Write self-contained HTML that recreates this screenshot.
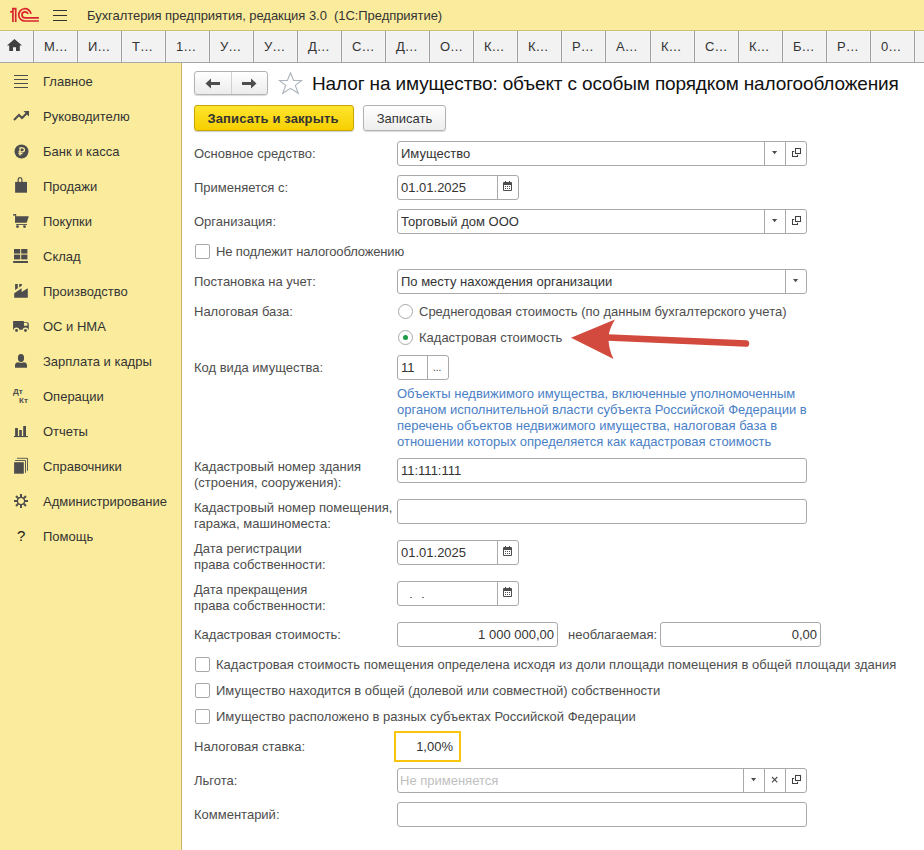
<!DOCTYPE html><html><head><meta charset="utf-8"><style>
*{margin:0;padding:0;box-sizing:border-box}
html,body{width:924px;height:850px;overflow:hidden;background:#fff}
body{position:relative;font-family:"Liberation Sans",sans-serif;font-size:13px;color:#333}
.ab{position:absolute}
.t{position:absolute;white-space:nowrap;line-height:16px;font-size:13px;color:#4d4d4d}
.v{position:absolute;white-space:nowrap;line-height:16px;font-size:13px;color:#333}
.fld{position:absolute;border:1px solid #a9a9a9;border-radius:3px;background:#fff}
.cb{position:absolute;width:15px;height:15px;border:1px solid #a9a9a9;border-radius:2px;background:#fff}
.rb{position:absolute;width:15px;height:15px;border:1px solid #a9a9a9;border-radius:50%;background:#fff}
</style></head><body>
<div class="ab" style="left:0;top:0;width:924px;height:30px;background:#FBEC9D"></div>
<div class="ab" style="left:0;top:29px;width:924px;height:1px;background:#fdefa6"></div>
<div class="ab" style="left:0;top:30px;width:924px;height:1px;background:#cbbb6c"></div>
<svg class="ab" style="left:0;top:0" width="45" height="30" viewBox="0 0 45 30">
<g fill="none" stroke="#d9232e" stroke-width="1.7">
<path d="M12.9 22V8.7H15.7V22"/><path d="M10.1 11.8H13"/>
<path d="M31.0 13.9A6.15 6.15 0 1 0 24.95 21H38.9"/>
<path d="M28.0 14.0A3.05 3.05 0 1 0 25.05 17.9H38.9"/>
</g></svg>
<div class="ab" style="left:53px;top:10px;width:14px;height:1.4px;background:#333"></div>
<div class="ab" style="left:53px;top:15px;width:14px;height:1.4px;background:#333"></div>
<div class="ab" style="left:53px;top:20px;width:14px;height:1.4px;background:#333"></div>
<div class="v" style="left:87px;top:8px;color:#333;letter-spacing:-0.05px">Бухгалтерия предприятия, редакция 3.0 &nbsp;(1С:Предприятие)</div>
<div class="ab" style="left:0;top:31px;width:924px;height:32px;background:#f2f2f2;border-bottom:1px solid #a6a6a6"></div>
<div class="ab" style="left:0;top:31px;width:924px;height:1px;background:#f7f7fb"></div>
<div class="ab" style="left:32px;top:32px;width:3px;height:30px;background:#f7f7f7"></div>
<div class="ab" style="left:33px;top:31px;width:1px;height:31px;background:#9c9c9c"></div>
<div class="ab" style="left:76px;top:32px;width:3px;height:30px;background:#f7f7f7"></div>
<div class="ab" style="left:77px;top:31px;width:1px;height:31px;background:#9c9c9c"></div>
<div class="ab" style="left:120px;top:32px;width:3px;height:30px;background:#f7f7f7"></div>
<div class="ab" style="left:121px;top:31px;width:1px;height:31px;background:#9c9c9c"></div>
<div class="ab" style="left:164px;top:32px;width:3px;height:30px;background:#f7f7f7"></div>
<div class="ab" style="left:165px;top:31px;width:1px;height:31px;background:#9c9c9c"></div>
<div class="ab" style="left:208px;top:32px;width:3px;height:30px;background:#f7f7f7"></div>
<div class="ab" style="left:209px;top:31px;width:1px;height:31px;background:#9c9c9c"></div>
<div class="ab" style="left:252px;top:32px;width:3px;height:30px;background:#f7f7f7"></div>
<div class="ab" style="left:253px;top:31px;width:1px;height:31px;background:#9c9c9c"></div>
<div class="ab" style="left:296px;top:32px;width:3px;height:30px;background:#f7f7f7"></div>
<div class="ab" style="left:297px;top:31px;width:1px;height:31px;background:#9c9c9c"></div>
<div class="ab" style="left:340px;top:32px;width:3px;height:30px;background:#f7f7f7"></div>
<div class="ab" style="left:341px;top:31px;width:1px;height:31px;background:#9c9c9c"></div>
<div class="ab" style="left:384px;top:32px;width:3px;height:30px;background:#f7f7f7"></div>
<div class="ab" style="left:385px;top:31px;width:1px;height:31px;background:#9c9c9c"></div>
<div class="ab" style="left:428px;top:32px;width:3px;height:30px;background:#f7f7f7"></div>
<div class="ab" style="left:429px;top:31px;width:1px;height:31px;background:#9c9c9c"></div>
<div class="ab" style="left:472px;top:32px;width:3px;height:30px;background:#f7f7f7"></div>
<div class="ab" style="left:473px;top:31px;width:1px;height:31px;background:#9c9c9c"></div>
<div class="ab" style="left:516px;top:32px;width:3px;height:30px;background:#f7f7f7"></div>
<div class="ab" style="left:517px;top:31px;width:1px;height:31px;background:#9c9c9c"></div>
<div class="ab" style="left:560px;top:32px;width:3px;height:30px;background:#f7f7f7"></div>
<div class="ab" style="left:561px;top:31px;width:1px;height:31px;background:#9c9c9c"></div>
<div class="ab" style="left:604px;top:32px;width:3px;height:30px;background:#f7f7f7"></div>
<div class="ab" style="left:605px;top:31px;width:1px;height:31px;background:#9c9c9c"></div>
<div class="ab" style="left:649px;top:32px;width:3px;height:30px;background:#f7f7f7"></div>
<div class="ab" style="left:650px;top:31px;width:1px;height:31px;background:#9c9c9c"></div>
<div class="ab" style="left:693px;top:32px;width:3px;height:30px;background:#f7f7f7"></div>
<div class="ab" style="left:694px;top:31px;width:1px;height:31px;background:#9c9c9c"></div>
<div class="ab" style="left:737px;top:32px;width:3px;height:30px;background:#f7f7f7"></div>
<div class="ab" style="left:738px;top:31px;width:1px;height:31px;background:#9c9c9c"></div>
<div class="ab" style="left:781px;top:32px;width:3px;height:30px;background:#f7f7f7"></div>
<div class="ab" style="left:782px;top:31px;width:1px;height:31px;background:#9c9c9c"></div>
<div class="ab" style="left:825px;top:32px;width:3px;height:30px;background:#f7f7f7"></div>
<div class="ab" style="left:826px;top:31px;width:1px;height:31px;background:#9c9c9c"></div>
<div class="ab" style="left:869px;top:32px;width:3px;height:30px;background:#f7f7f7"></div>
<div class="ab" style="left:870px;top:31px;width:1px;height:31px;background:#9c9c9c"></div>
<div class="ab" style="left:913px;top:32px;width:3px;height:30px;background:#f7f7f7"></div>
<div class="ab" style="left:914px;top:31px;width:1px;height:31px;background:#9c9c9c"></div>
<div class="v" style="left:44px;top:39px;color:#333">М&#8230;</div>
<div class="v" style="left:88px;top:39px;color:#333">И&#8230;</div>
<div class="v" style="left:132px;top:39px;color:#333">Т&#8230;</div>
<div class="v" style="left:176px;top:39px;color:#333">1&#8230;</div>
<div class="v" style="left:220px;top:39px;color:#333">У&#8230;</div>
<div class="v" style="left:264px;top:39px;color:#333">У&#8230;</div>
<div class="v" style="left:308px;top:39px;color:#333">Д&#8230;</div>
<div class="v" style="left:352px;top:39px;color:#333">С&#8230;</div>
<div class="v" style="left:396px;top:39px;color:#333">Д&#8230;</div>
<div class="v" style="left:440px;top:39px;color:#333">О&#8230;</div>
<div class="v" style="left:484px;top:39px;color:#333">К&#8230;</div>
<div class="v" style="left:528px;top:39px;color:#333">К&#8230;</div>
<div class="v" style="left:572px;top:39px;color:#333">Р&#8230;</div>
<div class="v" style="left:616px;top:39px;color:#333">А&#8230;</div>
<div class="v" style="left:661px;top:39px;color:#333">К&#8230;</div>
<div class="v" style="left:705px;top:39px;color:#333">С&#8230;</div>
<div class="v" style="left:749px;top:39px;color:#333">К&#8230;</div>
<div class="v" style="left:793px;top:39px;color:#333">Б&#8230;</div>
<div class="v" style="left:837px;top:39px;color:#333">Р&#8230;</div>
<div class="v" style="left:881px;top:39px;color:#333">0&#8230;</div>
<svg class="ab" style="left:7px;top:39px" width="15" height="12" viewBox="0 0 15 12"><path d="M7.5 0L0 6.5H2.2V12H6V8.3H9V12H12.8V6.5H15Z" fill="#404040"/></svg>
<div class="ab" style="left:0;top:63px;width:181px;height:787px;background:#FBEC9D"></div>
<div class="ab" style="left:180px;top:63px;width:1px;height:787px;background:#fdefa6"></div>
<div class="ab" style="left:181px;top:63px;width:1px;height:787px;background:#c4b265"></div>
<div class="v" style="left:43px;top:74px;color:#333">Главное</div>
<div class="v" style="left:43px;top:109px;color:#333">Руководителю</div>
<div class="v" style="left:43px;top:144px;color:#333">Банк и касса</div>
<div class="v" style="left:43px;top:179px;color:#333">Продажи</div>
<div class="v" style="left:43px;top:214px;color:#333">Покупки</div>
<div class="v" style="left:43px;top:249px;color:#333">Склад</div>
<div class="v" style="left:43px;top:284px;color:#333">Производство</div>
<div class="v" style="left:43px;top:319px;color:#333">ОС и НМА</div>
<div class="v" style="left:43px;top:354px;color:#333">Зарплата и кадры</div>
<div class="v" style="left:43px;top:389px;color:#333">Операции</div>
<div class="v" style="left:43px;top:424px;color:#333">Отчеты</div>
<div class="v" style="left:43px;top:459px;color:#333">Справочники</div>
<div class="v" style="left:43px;top:494px;color:#333">Администрирование</div>
<div class="v" style="left:43px;top:529px;color:#333">Помощь</div>
<div class="ab" style="left:14px;top:75px;width:14px;height:1px;background:#4d4d4d"></div>
<div class="ab" style="left:14px;top:79px;width:14px;height:1px;background:#4d4d4d"></div>
<div class="ab" style="left:14px;top:83px;width:14px;height:1px;background:#4d4d4d"></div>
<div class="ab" style="left:14px;top:87px;width:14px;height:1px;background:#4d4d4d"></div>
<svg class="ab" style="left:13px;top:110px" width="17" height="11" viewBox="0 0 17 11"><path d="M1 10L6 5L9 8L14.5 2.5" fill="none" stroke="#4d4d4d" stroke-width="2"/><path d="M10.5 1H16V6.5Z" fill="#4d4d4d"/></svg>
<svg class="ab" style="left:14px;top:144px" width="15" height="15" viewBox="0 0 15 15"><circle cx="7.5" cy="7.5" r="7" fill="#4d4d4d"/><path d="M6 11.5V3.8H8.3C9.6 3.8 10.4 4.6 10.4 5.8C10.4 7 9.6 7.8 8.3 7.8H4.5M4.5 9.6H8.5" fill="none" stroke="#FBEC9D" stroke-width="1.3"/></svg>
<svg class="ab" style="left:13px;top:176px" width="16" height="18" viewBox="0 0 16 18"><path d="M2.1 5.9H14V16.7H2.1Z" fill="#4d4d4d"/><path d="M5.2 6.5V3.6C5.2 2.5 5.9 1.7 7.05 1.7C8.2 1.7 8.9 2.5 8.9 3.6V6.5" fill="none" stroke="#4d4d4d" stroke-width="1.2"/></svg>
<svg class="ab" style="left:13px;top:214px" width="17" height="15" viewBox="0 0 17 15"><rect x="0.1" y="0.1" width="2.9" height="1.5" fill="#4d4d4d"/><rect x="2.2" y="0.1" width="1" height="8.6" fill="#4d4d4d"/><path d="M2.2 2.2H15.8L13.7 8.7H2.2Z" fill="#4d4d4d"/><rect x="3.1" y="10.1" width="10.9" height="0.9" fill="#4d4d4d"/><circle cx="4.5" cy="12.6" r="1.4" fill="#4d4d4d"/><circle cx="11.5" cy="12.6" r="1.4" fill="#4d4d4d"/></svg>
<svg class="ab" style="left:13px;top:248px" width="16" height="16" viewBox="0 0 16 16"><rect x="1" y="1" width="6.2" height="4.6" fill="#4d4d4d"/><rect x="8.2" y="1" width="6.2" height="4.6" fill="#4d4d4d"/><rect x="1" y="6.6" width="6.2" height="4.8" fill="#4d4d4d"/><rect x="8.2" y="6.6" width="6.2" height="4.8" fill="#4d4d4d"/><rect x="0.2" y="13" width="14.8" height="2" fill="#4d4d4d"/></svg>
<svg class="ab" style="left:13px;top:283px" width="16" height="16" viewBox="0 0 16 16"><path d="M1.2 14.8V10.3L8.6 5.2V9.1L14.8 5.2V14.8Z" fill="#4d4d4d"/><path d="M2.1 1H4.8V5.3L2.1 7Z" fill="#4d4d4d"/><path d="M6.2 1H8.9V2.6L6.2 4.4Z" fill="#4d4d4d"/></svg>
<svg class="ab" style="left:13px;top:320px" width="17" height="14" viewBox="0 0 17 14"><path d="M0.1 1H10.8V2.2H14.3Q15.8 2.2 15.8 4V9.7H0.1Z" fill="#4d4d4d"/><path d="M11 3H13.9L14.4 3.6V5.7H11Z" fill="#FBEC9D"/><circle cx="3.5" cy="10.5" r="2.9" fill="#FBEC9D"/><circle cx="12.5" cy="10.5" r="2.9" fill="#FBEC9D"/><circle cx="3.5" cy="10.5" r="1.4" fill="#4d4d4d"/><circle cx="12.5" cy="10.5" r="1.4" fill="#4d4d4d"/></svg>
<svg class="ab" style="left:14px;top:353px" width="14" height="16" viewBox="0 0 14 16"><ellipse cx="7" cy="4.9" rx="3.1" ry="4" fill="#4d4d4d"/><path d="M1 14.8V12.5Q1 9.3 4.5 9.2Q7 10.4 9.5 9.2Q13 9.3 13 12.5V14.8Z" fill="#4d4d4d"/></svg>
<div class="ab" style="left:13px;top:388px;font-size:8px;font-weight:bold;color:#4d4d4d;line-height:8px">Дт</div>
<div class="ab" style="left:19px;top:397px;font-size:8px;font-weight:bold;color:#4d4d4d;line-height:8px">Кт</div>
<svg class="ab" style="left:13px;top:425px" width="16" height="13" viewBox="0 0 16 13"><rect x="2.1" y="3" width="2.8" height="8.3" fill="#4d4d4d"/><rect x="6.2" y="5" width="2.6" height="6.3" fill="#4d4d4d"/><rect x="10.2" y="1" width="2.8" height="10.3" fill="#4d4d4d"/><rect x="0.9" y="11" width="14" height="1.1" fill="#4d4d4d"/></svg>
<svg class="ab" style="left:13px;top:456px" width="16" height="19" viewBox="0 0 16 19"><rect x="1.1" y="6.2" width="9.7" height="11.5" fill="#4d4d4d"/><path d="M2.1 4.5H12.5V16.8" fill="none" stroke="#4d4d4d" stroke-width="0.9"/><path d="M4 2.3H14.5V14.8" fill="none" stroke="#4d4d4d" stroke-width="0.9"/></svg>
<svg class="ab" style="left:13px;top:493px" width="16" height="16" viewBox="0 0 16 16"><g fill="#4d4d4d" transform="translate(8 8)"><rect x="-1" y="-7" width="2" height="3" transform="rotate(0)"/><rect x="-1" y="-7" width="2" height="3" transform="rotate(45)"/><rect x="-1" y="-7" width="2" height="3" transform="rotate(90)"/><rect x="-1" y="-7" width="2" height="3" transform="rotate(135)"/><rect x="-1" y="-7" width="2" height="3" transform="rotate(180)"/><rect x="-1" y="-7" width="2" height="3" transform="rotate(225)"/><rect x="-1" y="-7" width="2" height="3" transform="rotate(270)"/><rect x="-1" y="-7" width="2" height="3" transform="rotate(315)"/><circle r="3.65" fill="none" stroke="#4d4d4d" stroke-width="1.3"/></g></svg>
<div class="ab" style="left:17px;top:527px;font-size:15px;color:#1a1a1a;line-height:17px">?</div>
<div class="ab" style="left:194px;top:71px;width:74px;height:24px;border:1px solid #b3b3b3;border-radius:3px;background:linear-gradient(#fff,#ececec);box-shadow:0 1px 1px rgba(0,0,0,.15)"></div>
<div class="ab" style="left:231px;top:72px;width:1px;height:22px;background:#d0d0d0"></div>
<svg class="ab" style="left:205px;top:78px" width="16" height="11" viewBox="0 0 16 11"><path d="M0.5 5.5L6 0.5V4H15V7H6V10.5Z" fill="#4d4d4d"/></svg>
<svg class="ab" style="left:241px;top:78px" width="16" height="11" viewBox="0 0 16 11"><path d="M15.5 5.5L10 0.5V4H1V7H10V10.5Z" fill="#4d4d4d"/></svg>
<svg class="ab" style="left:278px;top:72px" width="25" height="23" viewBox="0 0 25 23"><path d="M12.5 0.8L15.6 8.5H23.6L17.3 13.4L20.3 21.3L12.5 16.4L4.7 21.3L7.7 13.4L1.4 8.5H9.4Z" fill="none" stroke="#aab2bb" stroke-width="1.1" stroke-linejoin="miter"/></svg>
<div class="ab" style="left:312px;top:73px;font-size:19px;letter-spacing:-0.13px;line-height:22px;color:#111;white-space:nowrap">Налог на имущество: объект с особым порядком налогообложения</div>
<div class="ab" style="left:194px;top:105px;width:160px;height:26px;border:1px solid #c9a600;border-radius:3px;background:linear-gradient(#ffe52e,#f6cf00);box-shadow:0 1px 1px rgba(0,0,0,.2)"></div>
<div class="ab" style="left:193px;top:111px;width:160px;text-align:center;font-weight:bold;font-size:13px;line-height:16px;color:#333;letter-spacing:0.12px">Записать и закрыть</div>
<div class="ab" style="left:363px;top:105px;width:83px;height:26px;border:1px solid #b3b3b3;border-radius:3px;background:linear-gradient(#fff,#ededed);box-shadow:0 1px 1px rgba(0,0,0,.15)"></div>
<div class="ab" style="left:363px;top:111px;width:83px;text-align:center;font-size:13px;line-height:16px;color:#333">Записать</div>
<div class="t" style="left:194px;top:146px;">Основное средство:</div>
<div class="fld" style="left:397px;top:141px;width:410px;height:25px;"></div>
<div class="ab" style="left:764px;top:142px;width:1px;height:23px;background:#A9A9A9"></div>
<div class="ab" style="left:785px;top:142px;width:1px;height:23px;background:#A9A9A9"></div>
<svg class="ab" style="left:772px;top:151px" width="6" height="4" viewBox="0 0 6 4"><path d="M0 0H5.2L2.6 3.2Z" fill="#4d4d4d"/></svg>
<svg class="ab" style="left:791px;top:147px" width="11" height="11" viewBox="0 0 11 11"><path d="M3.2 4.5H1.5V9.5H6.5V7.8" fill="none" stroke="#404040" stroke-width="1.05"/><rect x="4.5" y="1.5" width="5" height="5" fill="none" stroke="#404040" stroke-width="1.05"/></svg>
<div class="v" style="left:401px;top:146px;">Имущество</div>
<div class="t" style="left:194px;top:180px;">Применяется с:</div>
<div class="fld" style="left:397px;top:175px;width:122px;height:25px;"></div>
<div class="ab" style="left:497px;top:176px;width:1px;height:23px;background:#A9A9A9"></div>
<svg class="ab" style="left:503px;top:180px" width="9" height="11" viewBox="0 0 9 11" shape-rendering="crispEdges"><rect x="0" y="2" width="9" height="9" rx="1" fill="#4d4d4d" shape-rendering="geometricPrecision"/><rect x="1" y="5" width="7" height="5" fill="#fff"/><rect x="2" y="1" width="1" height="2" fill="#4d4d4d"/><rect x="6" y="1" width="1" height="2" fill="#4d4d4d"/><g fill="#4d4d4d"><rect x="2" y="6" width="1" height="1"/><rect x="4" y="6" width="1" height="1"/><rect x="6" y="6" width="1" height="1"/><rect x="2" y="8" width="1" height="1"/><rect x="4" y="8" width="1" height="1"/><rect x="6" y="8" width="1" height="1"/></g></svg>
<div class="v" style="left:401px;top:180px;">01.01.2025</div>
<div class="t" style="left:194px;top:214px;">Организация:</div>
<div class="fld" style="left:397px;top:209px;width:410px;height:25px;"></div>
<div class="ab" style="left:764px;top:210px;width:1px;height:23px;background:#A9A9A9"></div>
<div class="ab" style="left:785px;top:210px;width:1px;height:23px;background:#A9A9A9"></div>
<svg class="ab" style="left:772px;top:219px" width="6" height="4" viewBox="0 0 6 4"><path d="M0 0H5.2L2.6 3.2Z" fill="#4d4d4d"/></svg>
<svg class="ab" style="left:791px;top:215px" width="11" height="11" viewBox="0 0 11 11"><path d="M3.2 4.5H1.5V9.5H6.5V7.8" fill="none" stroke="#404040" stroke-width="1.05"/><rect x="4.5" y="1.5" width="5" height="5" fill="none" stroke="#404040" stroke-width="1.05"/></svg>
<div class="v" style="left:401px;top:214px;">Торговый дом ООО</div>
<div class="cb" style="left:195px;top:244px"></div>
<div class="t" style="left:216px;top:244px;letter-spacing:-0.15px">Не подлежит налогообложению</div>
<div class="t" style="left:194px;top:274px;">Постановка на учет:</div>
<div class="fld" style="left:397px;top:269px;width:410px;height:25px;"></div>
<div class="ab" style="left:785px;top:270px;width:1px;height:23px;background:#A9A9A9"></div>
<svg class="ab" style="left:793px;top:279px" width="6" height="4" viewBox="0 0 6 4"><path d="M0 0H5.2L2.6 3.2Z" fill="#4d4d4d"/></svg>
<div class="v" style="left:401px;top:274px;">По месту нахождения организации</div>
<div class="t" style="left:194px;top:304px;">Налоговая база:</div>
<div class="rb" style="left:398px;top:304px"></div>
<div class="t" style="left:419px;top:304px;">Среднегодовая стоимость (по данным бухгалтерского учета)</div>
<div class="rb" style="left:398px;top:330px"></div>
<div class="ab" style="left:403px;top:335px;width:5px;height:5px;border-radius:50%;background:#1c9b46"></div>
<div class="t" style="left:419px;top:330px;">Кадастровая стоимость</div>
<div class="t" style="left:194px;top:360px;">Код вида имущества:</div>
<div class="fld" style="left:397px;top:355px;width:52px;height:25px;"></div>
<div class="ab" style="left:427px;top:356px;width:1px;height:23px;background:#A9A9A9"></div>
<div class="v" style="left:401px;top:360px;">11</div>
<div class="v" style="left:433px;top:360px;font-size:10px">...</div>
<div class="t" style="left:397px;top:385.5px;color:#4a80c6">Объекты недвижимого имущества, включенные уполномоченным</div>
<div class="t" style="left:397px;top:401.5px;color:#4a80c6">органом исполнительной власти субъекта Российской Федерации в</div>
<div class="t" style="left:397px;top:417.5px;color:#4a80c6">перечень объектов недвижимого имущества, налоговая база в</div>
<div class="t" style="left:397px;top:433.5px;color:#4a80c6">отношении которых определяется как кадастровая стоимость</div>
<div class="t" style="left:194px;top:459px;">Кадастровый номер здания</div>
<div class="t" style="left:194px;top:475px;">(строения, сооружения):</div>
<div class="fld" style="left:397px;top:458px;width:410px;height:25px;"></div>
<div class="v" style="left:401px;top:463px;">11:111:111</div>
<div class="t" style="left:194px;top:500px;">Кадастровый номер помещения,</div>
<div class="t" style="left:194px;top:516px;">гаража, машиноместа:</div>
<div class="fld" style="left:397px;top:499px;width:410px;height:25px;"></div>
<div class="t" style="left:194px;top:541px;">Дата регистрации</div>
<div class="t" style="left:194px;top:557px;">права собственности:</div>
<div class="fld" style="left:397px;top:540px;width:122px;height:25px;"></div>
<div class="ab" style="left:497px;top:541px;width:1px;height:23px;background:#A9A9A9"></div>
<svg class="ab" style="left:503px;top:545px" width="9" height="11" viewBox="0 0 9 11" shape-rendering="crispEdges"><rect x="0" y="2" width="9" height="9" rx="1" fill="#4d4d4d" shape-rendering="geometricPrecision"/><rect x="1" y="5" width="7" height="5" fill="#fff"/><rect x="2" y="1" width="1" height="2" fill="#4d4d4d"/><rect x="6" y="1" width="1" height="2" fill="#4d4d4d"/><g fill="#4d4d4d"><rect x="2" y="6" width="1" height="1"/><rect x="4" y="6" width="1" height="1"/><rect x="6" y="6" width="1" height="1"/><rect x="2" y="8" width="1" height="1"/><rect x="4" y="8" width="1" height="1"/><rect x="6" y="8" width="1" height="1"/></g></svg>
<div class="v" style="left:401px;top:545px;">01.01.2025</div>
<div class="t" style="left:194px;top:582px;">Дата прекращения</div>
<div class="t" style="left:194px;top:598px;">права собственности:</div>
<div class="fld" style="left:397px;top:581px;width:122px;height:25px;"></div>
<div class="ab" style="left:497px;top:582px;width:1px;height:23px;background:#A9A9A9"></div>
<svg class="ab" style="left:503px;top:586px" width="9" height="11" viewBox="0 0 9 11" shape-rendering="crispEdges"><rect x="0" y="2" width="9" height="9" rx="1" fill="#4d4d4d" shape-rendering="geometricPrecision"/><rect x="1" y="5" width="7" height="5" fill="#fff"/><rect x="2" y="1" width="1" height="2" fill="#4d4d4d"/><rect x="6" y="1" width="1" height="2" fill="#4d4d4d"/><g fill="#4d4d4d"><rect x="2" y="6" width="1" height="1"/><rect x="4" y="6" width="1" height="1"/><rect x="6" y="6" width="1" height="1"/><rect x="2" y="8" width="1" height="1"/><rect x="4" y="8" width="1" height="1"/><rect x="6" y="8" width="1" height="1"/></g></svg>
<div class="ab" style="left:410px;top:597px;width:2px;height:1px;background:#777"></div><div class="ab" style="left:422px;top:597px;width:2px;height:1px;background:#777"></div>
<div class="t" style="left:194px;top:627px;">Кадастровая стоимость:</div>
<div class="fld" style="left:397px;top:622px;width:161px;height:25px;"></div>
<div class="v" style="right:370px;top:627px;">1 000 000,00</div>
<div class="t" style="left:568px;top:627px;">необлагаемая:</div>
<div class="fld" style="left:660px;top:622px;width:161px;height:25px;"></div>
<div class="v" style="right:107px;top:627px;">0,00</div>
<div class="cb" style="left:195px;top:657px"></div>
<div class="t" style="left:216px;top:657px;letter-spacing:0.035px">Кадастровая стоимость помещения определена исходя из доли площади помещения в общей площади здания</div>
<div class="cb" style="left:195px;top:683px"></div>
<div class="t" style="left:216px;top:683px;">Имущество находится в общей (долевой или совместной) собственности</div>
<div class="cb" style="left:195px;top:709px"></div>
<div class="t" style="left:216px;top:709px;">Имущество расположено в разных субъектах Российской Федерации</div>
<div class="t" style="left:194px;top:739px;">Налоговая ставка:</div>
<div class="ab" style="left:394px;top:731px;width:67px;height:31px;border:2px solid #f8c40c;background:#fff"></div>
<div class="v" style="right:471px;top:739px;">1,00%</div>
<div class="t" style="left:194px;top:773px;">Льгота:</div>
<div class="fld" style="left:397px;top:768px;width:410px;height:25px;"></div>
<div class="ab" style="left:743px;top:769px;width:1px;height:23px;background:#A9A9A9"></div>
<div class="ab" style="left:764px;top:769px;width:1px;height:23px;background:#A9A9A9"></div>
<div class="ab" style="left:785px;top:769px;width:1px;height:23px;background:#A9A9A9"></div>
<svg class="ab" style="left:751px;top:778px" width="6" height="4" viewBox="0 0 6 4"><path d="M0 0H5.2L2.6 3.2Z" fill="#4d4d4d"/></svg>
<svg class="ab" style="left:771px;top:776px" width="7" height="7" viewBox="0 0 7 7"><path d="M1 1L6.3 6.3M6.3 1L1 6.3" stroke="#4d4d4d" stroke-width="1.1"/></svg>
<svg class="ab" style="left:791px;top:774px" width="11" height="11" viewBox="0 0 11 11"><path d="M3.2 4.5H1.5V9.5H6.5V7.8" fill="none" stroke="#404040" stroke-width="1.05"/><rect x="4.5" y="1.5" width="5" height="5" fill="none" stroke="#404040" stroke-width="1.05"/></svg>
<div class="t" style="left:400px;top:773px;color:#c0c0c0">Не применяется</div>
<div class="t" style="left:194px;top:807px;">Комментарий:</div>
<div class="fld" style="left:397px;top:802px;width:410px;height:25px;"></div>
<svg class="ab" style="left:0;top:0" width="924" height="850" viewBox="0 0 924 850"><path d="M608 337.5L746 343.5" stroke="#d24a3d" stroke-width="6.5" stroke-linecap="round"/><path d="M571 337.8L615 319.5C611 326 608.5 332 608.5 338C608.5 345 610 352 613.5 359Z" fill="#d24a3d"/></svg>
</body></html>
